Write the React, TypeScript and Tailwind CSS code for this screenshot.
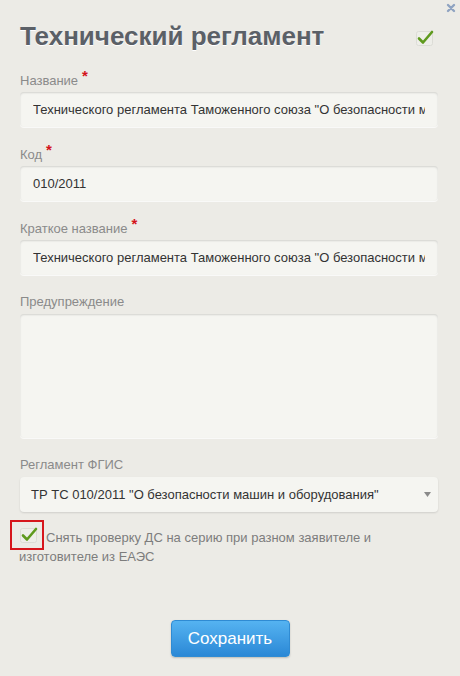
import React from "react";

const inputCls =
    "block w-full h-[35px] rounded-[4px] bg-[#f5f5f1] px-[13px] text-[13px] text-[#333] shadow-[inset_0_1px_2px_rgba(0,0,0,0.14),0_1px_0_rgba(255,255,255,0.7)] outline-none";

const Label = ({ text, required }: { text: string; required?: boolean }) => (
    <div className="h-[18px] leading-[18px] text-[13px] text-[#8a8a8a] mb-[3px]">
        {text}
        {required && <span className="relative -top-[4px] ml-[4px] text-[15px] font-bold text-[#d4141b]">*</span>}
    </div>
);

const CheckMark = () => (
    <svg width="20" height="18" viewBox="0 0 20 18">
        <rect x="1.5" y="2.5" width="16" height="14" rx="2" fill="#eeeee9" stroke="#dcdcd6" />
        <path d="M4 9.5 L8 13.5 L17 3" fill="none" stroke="#5f9a1e" strokeWidth="2.6" strokeLinecap="round" strokeLinejoin="round" />
    </svg>
);

const App = () => {
    const longName = 'Технического регламента Таможенного союза "О безопасности машин и оборудования"';

    return (
        <div className="relative w-[460px] h-[676px] bg-[#ecebe6] font-['Liberation_Sans',Arial,sans-serif]">
            {/* close */}
            <button className="absolute right-[4px] top-[3px] w-[10px] h-[10px]">
                <svg width="10" height="10" viewBox="0 0 10 10">
                    <path d="M2 2 L8 8 M8 2 L2 8" stroke="#8fa3c1" strokeWidth="2.4" strokeLinecap="round" />
                </svg>
            </button>

            <div className="pl-[20px] pr-[22px]">
                {/* header */}
                <div className="flex items-center justify-between h-[71px] pt-[2px]">
                    <h1 className="text-[26px] font-bold text-[#5b6067] [text-shadow:0_1px_0_#fff]">
                        Технический регламент
                    </h1>
                    <div className="mr-[3px] mt-[2px]">
                        <CheckMark />
                    </div>
                </div>

                <div className="mb-[18px]">
                    <Label text="Название" required />
                    <input readOnly className={inputCls} value={longName} />
                </div>

                <div className="mb-[18px]">
                    <Label text="Код" required />
                    <input readOnly className={inputCls} value="010/2011" />
                </div>

                <div className="mb-[18px]">
                    <Label text="Краткое название" required />
                    <input readOnly className={inputCls} value={longName} />
                </div>

                <div className="mb-[18px]">
                    <Label text="Предупреждение" />
                    <div className="h-[124px] rounded-[4px] bg-[#f5f5f1] shadow-[inset_0_1px_2px_rgba(0,0,0,0.14),0_1px_0_rgba(255,255,255,0.7)]" />
                </div>

                <div>
                    <Label text="Регламент ФГИС" />
                    <div className="flex items-center justify-between h-[35px] rounded-[4px] bg-[#f5f5f1] pl-[11px] pr-[7px] shadow-[0_1px_2px_rgba(0,0,0,0.12)]">
                        <span className="text-[13px] text-[#333]">ТР ТС 010/2011 "О безопасности машин и оборудования"</span>
                        <svg width="7" height="5" viewBox="0 0 7 5">
                            <path d="M0 0 H7 L3.5 5 Z" fill="#8a8a8a" />
                        </svg>
                    </div>
                </div>
            </div>

            {/* checkbox */}
            <div className="relative mt-[16px] pl-[19px] pr-[40px]">
                <span className="absolute left-[10px] -top-[8px] w-[34px] h-[30px] border-2 border-[#d6161c]">
                    <span className="absolute left-[7px] top-[4px]">
                        <CheckMark />
                    </span>
                </span>
                <p className="indent-[27px] text-[13px] leading-[19px] text-[#7d7d7d]">
                    Снять проверку ДС на серию при разном заявителе и изготовителе из ЕАЭС
                </p>
            </div>

            <div className="flex justify-center mt-[54px]">
                <button className="h-[37px] w-[119px] rounded-[4px] border border-[#2f8bd3] bg-gradient-to-b from-[#55b3f1] to-[#2a88d6] text-[17px] text-white shadow-[0_1px_2px_rgba(0,0,0,0.2)]">
                    Сохранить
                </button>
            </div>
        </div>
    );
};

export default App;
